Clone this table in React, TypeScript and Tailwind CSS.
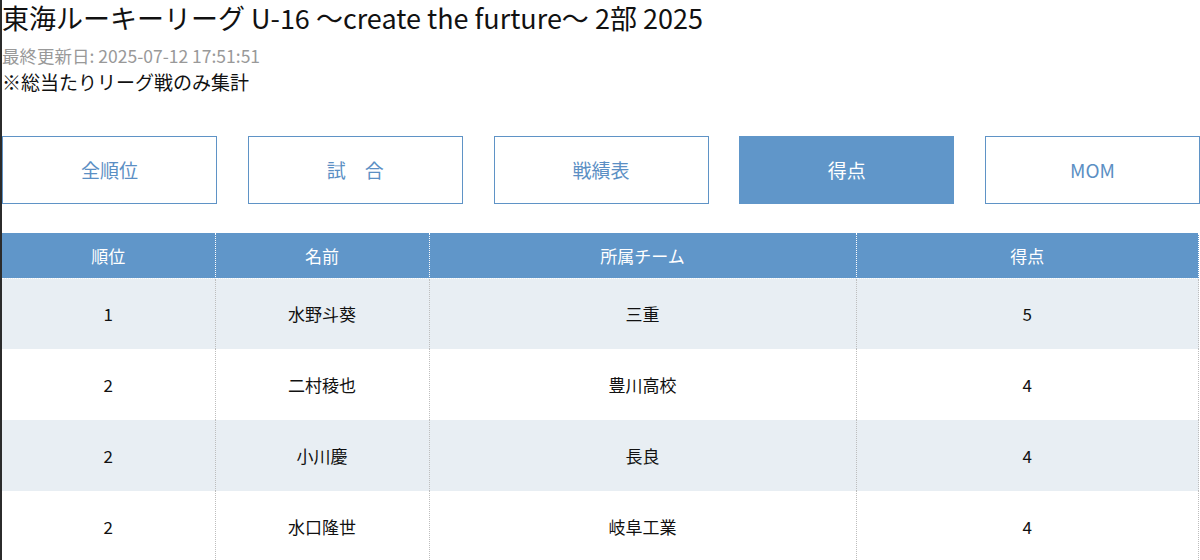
import React from 'react';

const tabs = ['全順位', '試　合', '戦績表', '得点', 'MOM'];

const rows = [
  { rank: '1', name: '水野斗葵', team: '三重', goals: '5' },
  { rank: '2', name: '二村稜也', team: '豊川高校', goals: '4' },
  { rank: '2', name: '小川慶', team: '長良', goals: '4' },
  { rank: '2', name: '水口隆世', team: '岐阜工業', goals: '4' },
];

export default function App() {
  return (
    <div
      className="min-h-[560px] bg-white border-l-2 border-[#2b2b2b] text-[#111]"
      style={{ fontFamily: '"Noto Sans CJK JP", "Noto Sans", sans-serif' }}
    >
      <h1 className="text-[27px] leading-[36px] font-normal">
        東海ルーキーリーグ U-16 〜create the furture〜 2部 2025
      </h1>
      <p className="mt-2 text-[17.5px] leading-[24px] text-[#999]">最終更新日: 2025-07-12 17:51:51</p>
      <p className="text-[19px] leading-[28px]">※総当たりリーグ戦のみ集計</p>

      <div className="mt-10 flex justify-between">
        {tabs.map((t) => (
          <div
            key={t}
            className={
              t === '得点'
                ? 'w-[215px] h-[68px] flex items-center justify-center bg-[#6096c9] text-white text-[19px]'
                : 'w-[215px] h-[68px] flex items-center justify-center border border-[#5f93c6] text-[#5b8fc4] text-[19px]'
            }
          >
            {t}
          </div>
        ))}
      </div>

      <table className="mt-[29px] w-[1197px] border-collapse text-[17px] text-center">
        <thead>
          <tr className="bg-[#6096c9] text-white h-[45px]">
            <th className="w-[213px] font-normal border-r border-b border-dotted border-white">順位</th>
            <th className="w-[214px] font-normal border-r border-b border-dotted border-white">名前</th>
            <th className="w-[427px] font-normal border-r border-b border-dotted border-white">所属チーム</th>
            <th className="font-normal border-r border-b border-dotted border-white">得点</th>
          </tr>
        </thead>
        <tbody>
          {rows.map((r, i) => (
            <tr key={i} className={i % 2 === 0 ? 'bg-[#e8eef3] h-[71px]' : 'bg-white h-[71px]'}>
              <td className="border-r border-dotted border-[#bdbdbd]">{r.rank}</td>
              <td className="border-r border-dotted border-[#bdbdbd]">{r.name}</td>
              <td className="border-r border-dotted border-[#bdbdbd]">{r.team}</td>
              <td className="border-r border-dotted border-[#bdbdbd]">{r.goals}</td>
            </tr>
          ))}
        </tbody>
      </table>
    </div>
  );
}
